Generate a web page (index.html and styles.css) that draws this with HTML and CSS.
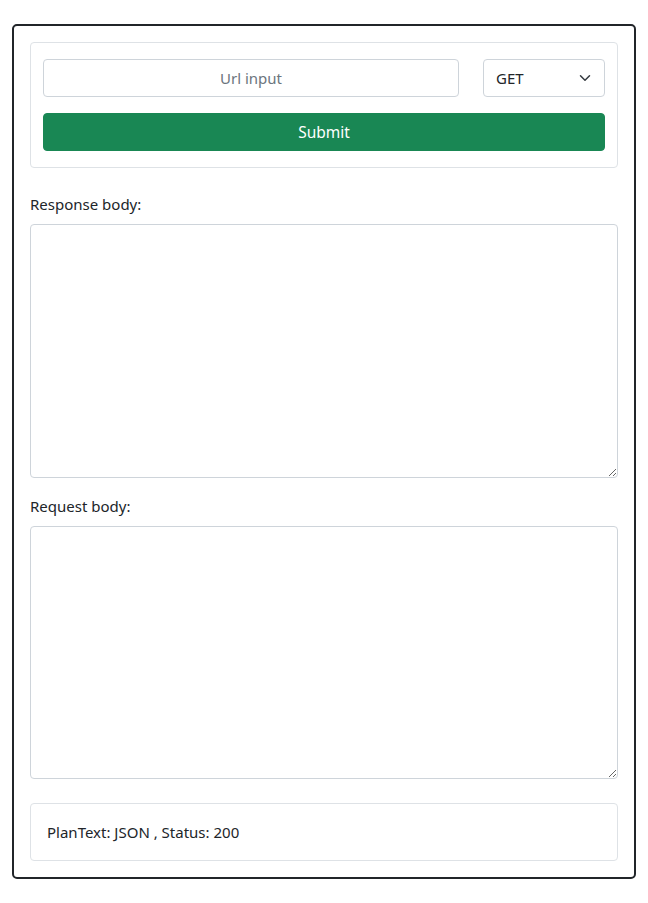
FILE: index.html
```html
<!DOCTYPE html>
<html lang="en">
<head>
<meta charset="utf-8">
<title>Request tool</title>
<link rel="stylesheet" href="styles.css">
</head>
<body>
<main class="frame">
  <section class="card request-card">
    <div class="url-row">
      <input class="field url-input" type="text" placeholder="Url input">
      <div class="select-wrap">
        <select class="field method-select">
          <option>GET</option>
          <option>POST</option>
          <option>PUT</option>
          <option>DELETE</option>
        </select>
        <svg class="chevron" width="16" height="12" viewBox="0 0 16 16" preserveAspectRatio="xMidYMid meet"><path d="M2 5l6 6 6-6" fill="none" stroke="#343a40" stroke-width="2" stroke-linecap="round" stroke-linejoin="round"/></svg>
      </div>
    </div>
    <button class="submit-btn" type="button">Submit</button>
  </section>

  <label class="form-label">Response body:</label>
  <textarea class="field area area-response"></textarea>

  <label class="form-label label-request">Request body:</label>
  <textarea class="field area area-request"></textarea>

  <section class="card status-card">PlanText: JSON , Status: 200</section>
</main>
</body>
</html>
```

FILE: styles.css
```css
* { box-sizing: border-box; }

html, body {
  margin: 0;
  padding: 0;
  background: #fff;
}

body {
  font-family: "Noto Sans", "Open Sans", sans-serif;
  font-size: 15px;
  line-height: 24px;
  color: #212529;
  padding: 24px 12px 0;
}

.frame {
  width: 624px;
  border: 2px solid #212529;
  border-radius: 5px;
  padding: 16px;
  display: flex;
  flex-direction: column;
}

.card {
  border: 1px solid #dee2e6;
  border-radius: 4px;
}

.request-card {
  padding: 16px 12px;
  display: flex;
  flex-direction: column;
  gap: 16px;
}

.url-row {
  display: flex;
  gap: 24px;
}

.field {
  font-family: inherit;
  font-size: 15px;
  font-weight: 400;
  color: #212529;
  border: 1px solid #ced4da;
  border-radius: 4px;
  background: #fff;
  outline: none;
}

.url-input {
  width: 416px;
  height: 38px;
  padding: 6px 12px;
  text-align: center;
}

.url-input::placeholder {
  color: #6c757d;
}

.select-wrap {
  position: relative;
  width: 122px;
  height: 38px;
}

.method-select {
  appearance: none;
  -webkit-appearance: none;
  width: 100%;
  height: 100%;
  padding: 6px 36px 6px 12px;
  font-weight: 400;
}

.chevron {
  position: absolute;
  right: 12px;
  top: 13px;
  width: 16px;
  height: 12px;
  pointer-events: none;
}

.submit-btn {
  height: 38px;
  width: 100%;
  border: 1px solid #198754;
  border-radius: 4px;
  background: #198754;
  color: #fff;
  font-family: inherit;
  font-size: 15.5px;
}

.form-label {
  display: block;
  margin-top: 24px;
  margin-bottom: 8px;
}

.label-request {
  margin-top: 16px;
}

.area {
  display: block;
  width: 100%;
  resize: vertical;
  padding: 6px 12px;
}

.area-response { height: 254px; }
.area-request { height: 253px; }

.status-card {
  margin-top: 24px;
  padding: 16px;
}
```
